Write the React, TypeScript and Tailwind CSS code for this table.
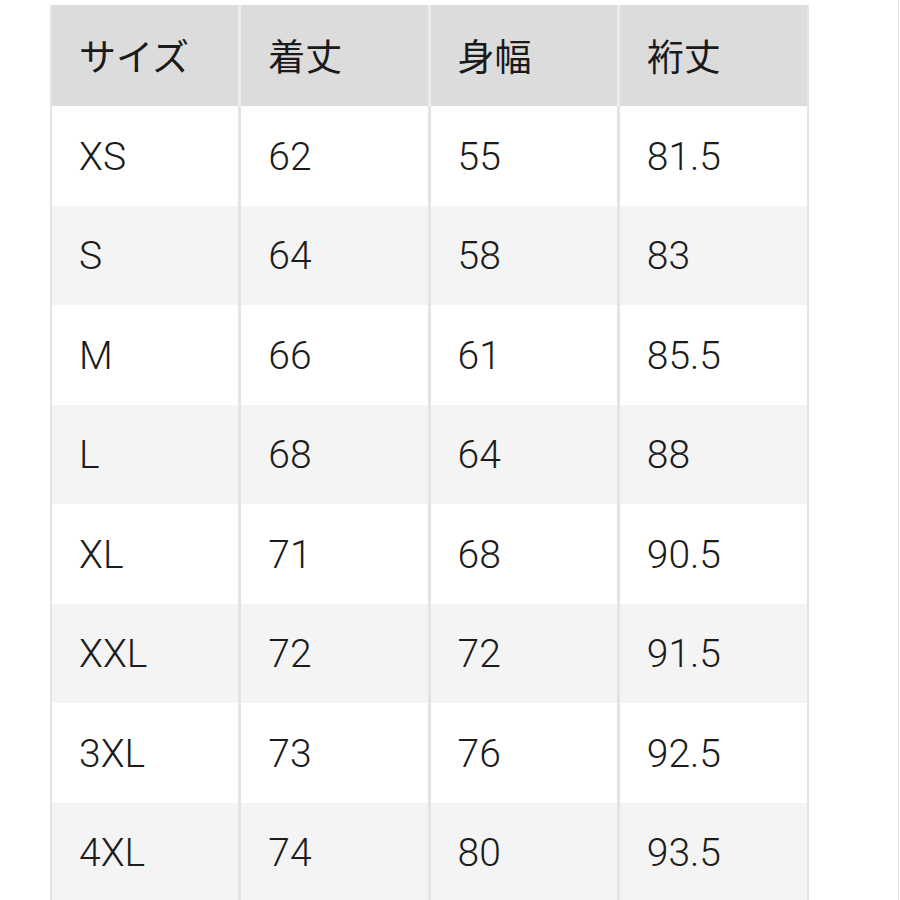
const headers = ["サイズ", "着丈", "身幅", "裄丈"];

const rows: string[][] = [
  ["XS", "62", "55", "81.5"],
  ["S", "64", "58", "83"],
  ["M", "66", "61", "85.5"],
  ["L", "68", "64", "88"],
  ["XL", "71", "68", "90.5"],
  ["XXL", "72", "72", "91.5"],
  ["3XL", "73", "76", "92.5"],
  ["4XL", "74", "80", "93.5"],
];

export default function App() {
  return (
    <div className="h-[900px] w-[899px] overflow-hidden border-r border-[#e3e3e3] bg-white font-['Roboto','Noto_Sans_CJK_JP',sans-serif] text-[#1c1c1c]">
      <div className="ml-[50px] mt-[5px] w-[759px] border-l-2 border-[#e4e4e4]">
        <div className="grid h-[101px] grid-cols-4 bg-[#dcdcdc]">
          {headers.map((label) => (
            <div
              key={label}
              className="flex items-center border-r-[3px] border-[#ececec] pl-[27px] text-[37px] font-['Noto_Sans_CJK_JP',sans-serif] font-normal text-[#1a1a1a] last:border-r-2 last:border-[#e4e4e4]"
            >
              {label}
            </div>
          ))}
        </div>
        {rows.map((row, index) => (
          <div
            key={row[0]}
            className={`grid h-[99.5px] grid-cols-4 ${index % 2 === 0 ? "bg-white" : "bg-[#f4f4f4]"}`}
          >
            {row.map((cell, col) => (
              <div
                key={col}
                className="flex items-center border-r-[3px] border-[#e4e4e4] pl-[27px] pt-[2px] text-[39px] font-light last:border-r-2"
              >
                {cell}
              </div>
            ))}
          </div>
        ))}
      </div>
    </div>
  );
}
